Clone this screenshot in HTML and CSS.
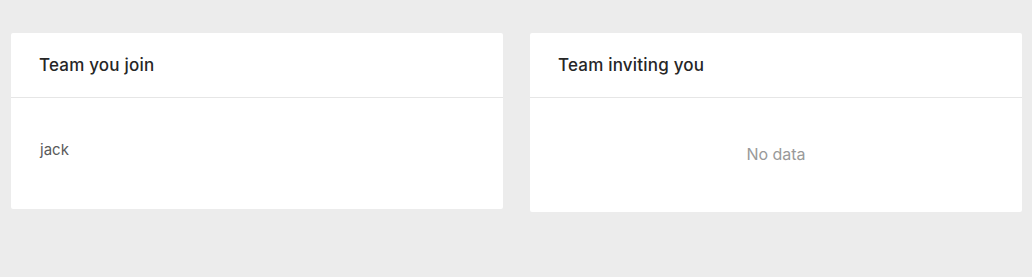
FILE: index.html
```html
<!DOCTYPE html>
<html lang="en">

<head>
    <meta charset="UTF-8">
    <meta name="viewport" content="width=device-width, initial-scale=1.0">
    <title>Teams</title>
    <link rel="stylesheet" href="styles.css">
</head>

<body>
    <div class="teams">
        <div class="card">
            <div class="card-head">Team you join</div>
            <div class="card-body">
                <div class="team-name">jack</div>
            </div>
        </div>
        <div class="card">
            <div class="card-head">Team inviting you</div>
            <div class="card-body card-empty">
                <div class="empty">No data</div>
            </div>
        </div>
    </div>
</body>

</html>
```

FILE: styles.css
```css
/* reset start */
* {
    padding: 0;
    margin: 0;
    box-sizing: border-box;
}

html,
body {
    width: 100%;
    height: 100%;
}

body {
    background-color: #ececec;
    font-family: Inter, "Noto Sans", sans-serif;
    overflow: hidden;
}

/* reset end */
.teams {
    display: flex;
    align-items: flex-start;
    gap: 27px;
    padding: 33px 10px 0 11px;
}

.card {
    flex: 1;
    background-color: #fff;
    border-radius: 2px;
}

.card-head {
    height: 65px;
    line-height: 64px;
    padding: 0 28px;
    font-size: 17px;
    font-weight: 500;
    letter-spacing: 0.2px;
    color: #262626;
    border-bottom: 1px solid #e6e6e6;
}

.card-body {
    padding: 41px 29px 48px;
    font-size: 15px;
    line-height: 22px;
}

.team-name {
    color: #5a5a5a;
}

.card-empty {
    padding: 45px 29px 47px;
    text-align: center;
}

.empty {
    font-size: 16px;
    color: #999;
}
```
